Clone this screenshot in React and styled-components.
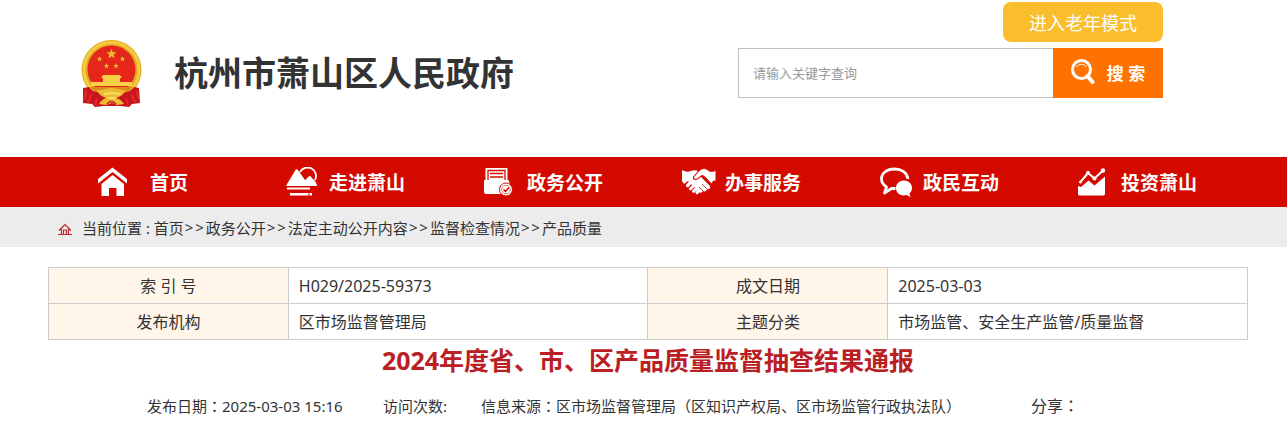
import React, { useState } from "react";
import styled, { createGlobalStyle } from "styled-components";

const GlobalStyle = createGlobalStyle`
  * {
    box-sizing: border-box;
  }

  body {
    margin: 0;
    background: #fff;
    color: #333;
    font-family: "Noto Sans", "Noto Sans CJK SC", sans-serif;
    font-size: 15px;
  }

  a {
    color: inherit;
    text-decoration: none;
  }

  input,
  button {
    font-family: inherit;
  }
`;

const Header = styled.header`
  display: flex;
  justify-content: space-between;
  align-items: flex-start;
  padding: 2px 124px 49px 80px;
`;

const Brand = styled.a`
  display: flex;
  align-items: center;
  gap: 30px;
  padding-top: 36px;
`;

const SiteName = styled.h1`
  margin: 0;
  font-size: 34px;
  line-height: 40px;
  font-weight: 700;
  white-space: nowrap;
`;

const Tools = styled.div`
  display: flex;
  flex-direction: column;
  align-items: flex-end;
  gap: 6px;
  width: 425px;
`;

const ElderButton = styled.button`
  width: 160px;
  height: 40px;
  border: 0;
  border-radius: 8px;
  background: #fabe2c;
  color: #fff;
  font-size: 18px;
  cursor: pointer;
`;

const SearchForm = styled.form`
  display: flex;
  width: 100%;
  height: 50px;
`;

const SearchInput = styled.input`
  flex: 1;
  min-width: 0;
  padding: 0 14px;
  border: 1px solid #bfbfbf;
  border-right: 0;
  border-radius: 0;
  font-size: 13px;
  outline: none;

  &::placeholder {
    color: #999;
  }
`;

const SearchButton = styled.button`
  display: flex;
  align-items: center;
  justify-content: center;
  gap: 12px;
  width: 110px;
  padding: 0 0 2px;
  border: 0;
  background: #ff7200;
  color: #fff;
  font-size: 17px;
  font-weight: 700;
  cursor: pointer;
`;

const NavBar = styled.nav`
  display: grid;
  grid-template-columns: repeat(6, 1fr);
  padding: 0 21px 0 78px;
  background: #d40a00;
`;

const NavLink = styled.a`
  display: flex;
  align-items: center;
  height: 50px;
  padding-left: ${(props) => (props.$wide ? "20px" : "10px")};
  color: #fff;
  font-size: 19px;
  font-weight: 700;
  white-space: nowrap;

  svg {
    width: 34px;
    height: 30px;
    margin-right: ${(props) => (props.$wide ? "18px" : "9px")};
    flex: none;
  }
`;

const Crumbs = styled.nav`
  display: flex;
  align-items: center;
  height: 40px;
  padding: 0 57px;
  background: #ececec;
  white-space: nowrap;

  svg {
    margin: 4px 9px 0 0;
  }
`;

const Separator = styled.span`
  display: flex;
  justify-content: space-between;
  width: 22px;
  padding: 0 2px 0 1px;
`;

const Content = styled.main`
  padding: 20px 39px 12px 48px;
`;

const InfoTable = styled.table`
  width: 100%;
  table-layout: fixed;
  border-collapse: collapse;
  font-size: 16px;
  line-height: 24px;
`;

const Label = styled.th`
  width: 20%;
  height: 36px;
  padding: 0;
  border: 1px solid #ccc;
  background: #fff5e9;
  font-weight: 400;
`;

const Value = styled.td`
  width: 30%;
  padding: 0 10px;
  border: 1px solid #ccc;
`;

const Title = styled.h2`
  margin: 0;
  color: #ba2023;
  font-size: 25px;
  line-height: 40px;
  font-weight: 700;
  text-align: center;
`;

const Meta = styled.div`
  display: flex;
  gap: 34px;
  padding: 14px 99px 0;
  line-height: 24px;
  white-space: nowrap;
`;

const PublishDate = styled.span`
  min-width: 202px;
`;

const Share = styled.span`
  padding-left: 36px;
  font-size: 16px;
`;

// the traditional face sets the colon in the middle of its square
const Colon = styled.span`
  font-family: "Noto Sans CJK TC", sans-serif;
  line-height: 1;
`;

const STAR = "M0-1 .24-.32.95-.31.38.12.59.81 0 .4-.59.81-.38.12-.95-.31-.24-.32Z";

const Emblem = () => (
  <svg width="64" height="70" viewBox="0 0 64 70" aria-hidden="true">
    <circle cx="31.500" cy="32" r="30" fill="#e2aa22" />
    <circle cx="31.500" cy="32" r="27.500" fill="none" stroke="#f5cc3f" strokeWidth="3" />
    <circle cx="31.500" cy="31.500" r="24" fill="#e5261a" />
    <g fill="#f2b92f">
      <path d={STAR} transform="translate(31.500 16) scale(5.500)" />
      <path d={STAR} transform="translate(19.500 21) scale(3)" />
      <path d={STAR} transform="translate(42.500 21) scale(3)" />
      <path d={STAR} transform="translate(26.500 28) scale(3)" />
      <path d={STAR} transform="translate(36 28) scale(3)" />
    </g>
    <path d="M23 37h17l2 3h-2v4h12v4H11v-4h12v-4h-2z" fill="#f8cf45" />
    <path d="M10 49h43l-5 5H15z" fill="#d98c1c" />
    <path
      d="M3 50l6-1c4 5 8 6 14 5l8-3 9 3c6 1 10 0 14-5l5 1 1 15-8 1-3 3-9-1H24l-9 1-3-3-9-1z"
      fill="#c9151e"
    />
    <path
      d="M12 56l-4 8M51 56l4 8M17 60l-2 7M46 60l2 7M6 53l-1 8M57 53l1 8"
      stroke="#e42a25"
      strokeWidth="2"
    />
    <path
      d="M17 52c6 1 8-2 14-2s9 3 15 2c-3 5-6 7-10 8 4 1 6 3 8 6l-7 1-5-2-6 2-7-1c2-3 4-5 7-6-3-1-7-3-9-8z"
      fill="#edbb32"
    />
    <path d="M24 56l8-1 8 1M28 60h8" fill="none" stroke="#f9dc62" strokeWidth="2" />
    <path d="M27 66q4-5 9 0" fill="none" stroke="#c9151e" strokeWidth="1.500" />
  </svg>
);

const SearchIcon = () => (
  <svg width="24" height="26" viewBox="0 0 24 26" fill="none" stroke="#fff" aria-hidden="true">
    <circle cx="10.500" cy="10.500" r="9" strokeWidth="3" />
    <path d="M5.500 8a6 6 0 0 1 10 0" strokeWidth="1" />
    <path d="M16.500 17l5 6" strokeWidth="4" strokeLinecap="round" />
  </svg>
);

const HomeIcon = () => (
  <svg viewBox="0 0 34 30" fill="currentColor" aria-hidden="true">
    <path d="M0 12 14.500 0.500 29 12v4.500L14.500 5 0 16.500z" />
    <path d="M3.500 17 14.500 8 26 17v12h-7.500v-8h-7.500v8h-7.500z" />
  </svg>
);

const MountainIcon = () => (
  <svg viewBox="0 0 34 30" fill="currentColor" aria-hidden="true">
    <path d="M14 5a8.300 8.300 0 1 1 15 8" fill="none" stroke="currentColor" strokeWidth="1.800" />
    <path d="M0 19C2 15 6 9 8 5.500 10 1.500 11 1.500 13 4.500l6 8.500c2-1 3-4 5-4 2 1 2 3 4 4 2 2 3 4 3 6z" />
    <path d="M1 20.500h23v2H1zM4 26h18.500v2.500H4zM23.500 26h2.500v2.500h-2.500z" />
  </svg>
);

const DocumentIcon = () => (
  <svg viewBox="0 0 34 30" fill="currentColor" aria-hidden="true">
    <path d="M1.500 1h22v13h-22z" />
    <path d="M4 13V3.500h17V13M6 6.500h13M6 10h13" fill="none" stroke="#d40a00" strokeWidth="1.300" />
    <path d="M0 13h24.500l1 3v11H2q-2 0-2-2z" />
    <circle cx="22" cy="22.500" r="6.500" stroke="#d40a00" strokeWidth="1" />
    <circle cx="22" cy="22.500" r="4.500" fill="#d40a00" />
    <circle cx="22" cy="22.500" r="4" />
    <path d="M19.500 22.500l2 2 3.500-4" fill="none" stroke="#d40a00" strokeWidth="1.500" />
  </svg>
);

const HandshakeIcon = () => (
  <svg viewBox="0 0 34 30" fill="currentColor" aria-hidden="true">
    <path d="M0 3c3 2 6 2 9 1 3-1 5-1 7 0l-5 6c-1 3 3 4 5 2l3-2 9 9c1 2-1 4-3 3 0 2-2 3-4 2-1 2-3 2-4 1l-5-5-6-6-4 3-2-3V3z" />
    <path
      d="M5.500 18.500l2-2M8.500 21.500l3-3M11.500 24l2.500-2.500M15 25.500l1-1"
      fill="none"
      stroke="currentColor"
      strokeWidth="3.200"
      strokeLinecap="round"
    />
    <path
      d="M34 3c-3 2-6 2-8 0-3-2-6-2-9 1l-5.500 6c0 3 3 3 5 1l3-2.500c2 0 3 1 4 2l6 6.500 2-3h2.500z"
      stroke="#d40a00"
      strokeWidth="1"
    />
    <path d="M6 15l-3 3M10 18l-3.500 3.500M13 20.500 9.500 24M20 17l5 5M17 20l4 4" stroke="#d40a00" strokeWidth="0.800" />
  </svg>
);

const ChatIcon = () => (
  <svg viewBox="0 0 34 30" aria-hidden="true">
    <path
      d="M28 12C27 5 21 2 14.500 2 7 2 1.500 6 1.500 12c0 4 2 6 5 8l-2 6 7-4.500h4"
      fill="none"
      stroke="currentColor"
      strokeWidth="2.800"
      strokeLinejoin="round"
    />
    <path
      d="M24 13.500c4.500 0 8 3.300 8 7.500 0 2.500-1 4-2.500 5.500l1 3.500-4-2c-5 1.500-10.500-1-10.500-7 0-4.200 3.500-7.500 8-7.500z"
      fill="currentColor"
    />
  </svg>
);

const ChartIcon = () => (
  <svg viewBox="0 0 34 30" fill="currentColor" aria-hidden="true">
    <path d="M2.500 15 10 6l6.500 5.500L25 3.500" fill="none" stroke="currentColor" strokeWidth="2" />
    <circle cx="2.500" cy="15" r="1.500" />
    <circle cx="10" cy="6" r="2" />
    <circle cx="16.500" cy="11.500" r="2" />
    <circle cx="25" cy="3.500" r="2.200" />
    <path d="M0 19l3 1 7.500-6.500 6 5L27 9.500V27q0 1.500-2 1.500H2q-2 0-2-1.500z" />
  </svg>
);

const CrumbHomeIcon = () => (
  <svg width="16" height="12" viewBox="0 0 16 12" fill="none" stroke="#c1262b" aria-hidden="true">
    <path d="M2 7.500 8 1.500l6 6M4.500 6v5M11.500 6v5M6.500 11V7h3v4" strokeWidth="1.200" />
    <path d="M1 11.500h14" />
  </svg>
);

const navItems = [
  { label: "首页", Icon: HomeIcon, wide: true },
  { label: "走进萧山", Icon: MountainIcon },
  { label: "政务公开", Icon: DocumentIcon },
  { label: "办事服务", Icon: HandshakeIcon },
  { label: "政民互动", Icon: ChatIcon },
  { label: "投资萧山", Icon: ChartIcon },
];

const crumbs = ["首页", "政务公开", "法定主动公开内容", "监督检查情况", "产品质量"];

const App = () => {
  const [keyword, setKeyword] = useState("");

  return (
    <>
      <GlobalStyle />
      <Header>
        <Brand href="#">
          <Emblem />
          <SiteName>杭州市萧山区人民政府</SiteName>
        </Brand>
        <Tools>
          <ElderButton type="button">进入老年模式</ElderButton>
          <SearchForm onSubmit={(e) => e.preventDefault()}>
            <SearchInput
              type="text"
              aria-label="请输入关键字查询"
              placeholder="请输入关键字查询"
              value={keyword}
              onChange={(e) => setKeyword(e.target.value)}
            />
            <SearchButton type="submit">
              <SearchIcon />
              搜 索
            </SearchButton>
          </SearchForm>
        </Tools>
      </Header>
      <NavBar>
        {navItems.map(({ label, Icon, wide }) => (
          <NavLink key={label} href="#" $wide={wide}>
            <Icon />
            {label}
          </NavLink>
        ))}
      </NavBar>
      <Crumbs>
        <CrumbHomeIcon />
        <span>当前位置 :&nbsp;</span>
        {crumbs.map((crumb, i) => (
          <React.Fragment key={crumb}>
            {i > 0 && (
              <Separator>
                <span>&gt;</span>
                <span>&gt;</span>
              </Separator>
            )}
            <a href="#">{crumb}</a>
          </React.Fragment>
        ))}
      </Crumbs>
      <Content>
        <InfoTable>
          <tbody>
            <tr>
              <Label scope="row">索 引 号</Label>
              <Value>H029/2025-59373</Value>
              <Label scope="row">成文日期</Label>
              <Value>2025-03-03</Value>
            </tr>
            <tr>
              <Label scope="row">发布机构</Label>
              <Value>区市场监督管理局</Value>
              <Label scope="row">主题分类</Label>
              <Value>市场监管、安全生产监管/质量监督</Value>
            </tr>
          </tbody>
        </InfoTable>
        <Title>2024年度省、市、区产品质量监督抽查结果通报</Title>
        <Meta>
          <PublishDate>
            发布日期<Colon>：</Colon>2025-03-03 15:16
          </PublishDate>
          <span>访问次数:</span>
          <span>
            信息来源<Colon>：</Colon>区市场监督管理局（区知识产权局、区市场监管行政执法队）
          </span>
          <Share>
            分享<Colon>：</Colon>
          </Share>
        </Meta>
      </Content>
    </>
  );
};

export default App;
